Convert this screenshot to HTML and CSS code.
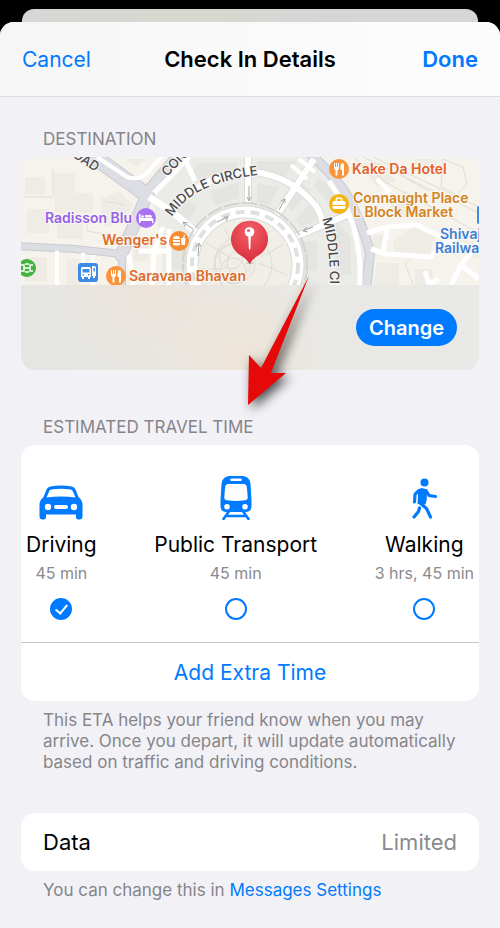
FILE: index.html
```html
<!DOCTYPE html>
<html lang="en">
<head>
    <meta charset="UTF-8">
    <meta name="viewport" content="width=device-width, initial-scale=1.0">
    <title>Check In Details</title>
    <link rel="stylesheet" href="styles.css">
</head>
<body>
    <div class="back-sheet"></div>
    <div class="sheet">
        <header class="nav-bar">
            <button type="button" class="nav-button">Cancel</button>
            <h1>Check In Details</h1>
            <button type="button" class="nav-button done">Done</button>
        </header>

        <main>
            <section class="destination">
                <h2>Destination</h2>
                <div class="map-card">
                    <svg class="map" viewBox="0 0 458 128" preserveAspectRatio="xMidYMid slice" role="img" aria-label="Map of the destination">
                        <defs>
                            <path id="circleNorth" d="M151 60Q172 24 245 17"/>
                            <path id="circleEast" d="M301 62Q312 92 308 170"/>
                            <radialGradient id="pinFill" cx="50%" cy="25%" r="75%">
                                <stop offset="0" stop-color="#f0616b"/>
                                <stop offset="1" stop-color="#d92b3a"/>
                            </radialGradient>
                        </defs>
                        <rect width="458" height="128" fill="#f5f3ec"/>

                        <!-- city blocks -->
                        <path fill="#eeece5" d="M4 20h20v18H4zM32 16h22v20h18v20H34zM6 52h22v24H6zM36 62h26v20H36zM80 42l18-8 14 14-10 18-20 4zM46 102h14v26H46zM4 100h22v24H4zM112 84h16v20h-16zM104 2h20l-8 8zM336 6h24l16 18-20 6zM390 2h26v16h-12zM366 40l20-6 14 20-24 8zM352 78h12v14h-12zM372 84l20-14 22 6-6 24-34-2zM356 106h22v22h-26zM394 112h18v16h-18zM424 92l16-12 18 10v12z"/>
                        <path fill="#ebebe8" d="M166 0H291L328 40L345 78L346 128H142L141 92L132 42Z"/>
                        <path fill="#e4e5e1" d="M176 6h40v10l-34 12-14-8zM236 4h40l-16 20-24-6zM190 34l28-9v16l-24 8zM236 26l22 5-10 18-12-4zM272 22l18 10-18 22-10-8zM292 44l10 16-22 10-6-8zM280 84h16v30h-14zM150 84h16v28h-16zM160 38l16 12-8 14-12-10zM310 60l20 20v38h-14zM298 20l18 18-10 6-14-16z"/>

                        <!-- rail tracks and footpaths -->
                        <g fill="none" stroke="#dfddd7">
                            <path d="M332 0L366 26 458 76M342 0L458 56M352 0L458 50"/>
                            <path d="M374 8l12 14 22 12M392 128l-8-22 8-6M422 2l20 8 4 16-10 12-16-8zM84 44l20 4M66 60v14l24 4M2 40h30V12"/>
                        </g>

                        <!-- main roads -->
                        <g fill="none" stroke="#c8cad0" stroke-linecap="round">
                            <path stroke-width="16" d="M54-14L126 38"/>
                            <path stroke-width="13" d="M126 38L100 98"/>
                            <path stroke-width="11" d="M122 40L162-8"/>
                            <path stroke-width="8" d="M-5 89L54 92 101 97V132"/>
                            <path stroke-width="10" d="M286-6Q320 24 330 46Q344 74 349 96L345 134"/>
                        </g>
                        <g fill="none" stroke="#dcdee3" stroke-linecap="round">
                            <path stroke-width="14" d="M54-14L126 38"/>
                            <path stroke-width="11" d="M126 38L100 98"/>
                            <path stroke-width="9" d="M122 40L162-8"/>
                            <path stroke-width="6" d="M-5 89L54 92 101 97V132"/>
                            <path stroke-width="8" d="M286-6Q320 24 330 46Q344 74 349 96L345 134"/>
                        </g>

                        <!-- streets -->
                        <g fill="none" stroke="#dcdddb" stroke-width="8" stroke-linejoin="round">
                            <path d="M128 40L150 54 176 76M227 0V46M256 58L293 2M272 81L326 58"/>
                            <path d="M227 14Q270 18 294 48Q300 55 302 68"/>
                        </g>
                        <g fill="none" stroke="#fff" stroke-linejoin="round">
                            <path stroke-width="6" d="M227 0V46M256 58L293 2M272 81L326 58"/>
                            <path stroke-width="7" d="M128 40L150 54 176 76"/>
                            <path stroke-width="5" d="M133 36L168 0"/>
                            <path stroke-width="6" d="M150 56Q175 20 227 14Q270 18 294 48Q300 55 302 68"/>
                            <path stroke-width="5" d="M142 70L133 96 131 128M148 72V128M118 94H148M112 128L108 98M164 2L174 24"/>
                            <path stroke-width="4" d="M76 0L106 20Q118 24 126 16L142-2"/>
                            <path stroke-width="4" d="M36 94V128M62 96V112M72 98V128M356 22L368 34 362 42"/>
                            <path stroke-width="5" d="M308 24L324 48Q336 70 339 108V128"/>
                            <path stroke-width="5" d="M346 76L366 70 396 68 408 74 427 83 458 94M350 92L366 97 410 100 424 84M366 72L362 96M458 86L440 108 430 128M440 108L458 122M404 114L408 127 418 122"/>
                            <path stroke-width="4" d="M270 8L286 22M278 2L294 15"/>
                        </g>

                        <!-- inner circle -->
                        <circle cx="224" cy="108" r="62" fill="none" stroke="#d2d4cc" stroke-width="2" stroke-dasharray="16 2"/>
                        <circle cx="224" cy="108" r="53" fill="#f0eee6" stroke="#d9dad7" stroke-width="13"/>
                        <circle cx="224" cy="108" r="53" fill="none" stroke="#fff" stroke-width="11"/>
                        <circle cx="224" cy="108" r="53" fill="none" stroke="#dfe1e1" stroke-width="4" stroke-dasharray="9 6"/>
                        <g fill="none" stroke="#dddcd1">
                            <circle cx="218" cy="106" r="12"/>
                            <circle cx="214" cy="106" r="20"/>
                            <circle cx="222" cy="108" r="29"/>
                            <circle cx="210" cy="100" r="12"/>
                            <circle cx="212" cy="114" r="13"/>
                            <path d="M183 84L208 100M180 112H202M192 136L212 114M222 66V84M262 88L240 100M266 118L238 106M248 74L236 94M204 72L214 92"/>
                        </g>
                        <g fill="none" stroke="#a2a3a5">
                            <path d="M228 29v14M226 40l2 4 2-4M258 53l6-11M260 44l4-2v4M196 65l11-5M203 60l4 0-2 4M172 72l-9-6M167 66l-5-1 2 5M177 99l1-12M175 90l3-4 2 4M292 70l-10 4M286 70l-4 4 5 1"/>
                        </g>

                        <!-- street names -->
                        <g class="street">
                            <text transform="translate(44 -5) rotate(33)">ROAD</text>
                            <text transform="translate(146 20) rotate(-46)">CONN</text>
                            <text><textPath href="#circleNorth">MIDDLE CIRCLE</textPath></text>
                            <text><textPath href="#circleEast">MIDDLE CIRCLE</textPath></text>
                        </g>

                        <!-- places -->
                        <g class="place">
                            <text x="24" y="66" fill="#9460e8">Radisson Blu</text>
                            <text x="81" y="88" fill="#dd6a2c">Wenger's</text>
                            <text x="108" y="124" fill="#dd6a2c">Saravana Bhavan</text>
                            <text x="331" y="17" fill="#e2612c">Kake Da Hotel</text>
                            <text x="332" y="46" fill="#d38325">Connaught Place</text>
                            <text x="332" y="60" fill="#d38325">L Block Market</text>
                            <text x="419" y="82" fill="#3c80d8">Shivaji</text>
                            <text x="414" y="96" fill="#3c80d8">Railway</text>
                        </g>
                        <rect x="456" y="49" width="12" height="18" rx="2" fill="#3f8ae4"/>

                        <circle cx="125" cy="61" r="10" fill="#a873f2"/>
                        <path fill="#fff" d="M118 57h1.500v4h11a2 2 0 0 1 2 2v3H131v-2h-11.500v2H118zM124 58h5a2 2 0 0 1 2 2v.500h-7z"/>
                        <circle cx="121.500" cy="59.500" r="1.300" fill="#fff"/>

                        <circle cx="158" cy="84" r="10" fill="#f78d35"/>
                        <path fill="#fff" d="M152 82q0-3 3.500-3t3.500 3zM152 83h7v2h-7zM152 86h7v1q0 1.500-1.500 1.500h-4q-1.500 0-1.500-1.500zM160 81h2l1-3h1l-.700 3h1.200l-.500 7h-3.500z"/>

                        <g fill="#f9943b">
                            <circle cx="95" cy="119" r="10"/>
                            <circle cx="318" cy="12" r="10"/>
                        </g>
                        <g id="cutlery" fill="#fff">
                            <path d="M90 113h1v4h1v-4h1v4h1v-4h1v5q0 1.500-1.500 2v5.500h-2V120q-1.500-.500-1.500-2zM98 113q2 0 2 2v10.500h-2V120h-1.500v-4q0-2 1.500-3z"/>
                        </g>
                        <use href="#cutlery" x="223" y="-107"/>

                        <circle cx="318" cy="47" r="10" fill="#f6b410"/>
                        <path fill="#fff" fill-rule="evenodd" d="M314.500 44v-2q0-1.500 1.500-1.500h4q1.500 0 1.500 1.500v2h1.500q1.500 0 1.500 1.500v5q0 1.500-1.500 1.500h-10q-1.500 0-1.500-1.500v-5q0-1.500 1.500-1.500zm1.500 0h4v-2h-4z"/>
                        <path stroke="#f6b410" d="M311 48.500H325"/>

                        <circle cx="6" cy="111" r="9" fill="#41b53d"/>
                        <path fill="none" stroke="#fff" stroke-width="1.500" d="M0 108h3v6H0M3 111h6M12 108H9v6h3M4 107h4M4 115h4"/>

                        <rect x="57" y="106" width="20" height="19" rx="3" fill="#3f8ae4"/>
                        <path fill="#fff" fill-rule="evenodd" d="M61 110h7q2 0 2 2v8h-1v2h-2v-2h-4v2h-2v-2h-1v-8q0-2 1-2zm.500 2v3.500h7V112zm0 5v1.500h1.500V117zm5.500 0v1.500h1.500V117zM71 109h2q2 0 2 2v8h-1v2h-2v-2h-1zm1.500 2v3.500h1.500V111z"/>

                        <!-- destination pin -->
                        <ellipse cx="229" cy="106" rx="4" ry="1" fill="#000" opacity=".15"/>
                        <path fill="url(#pinFill)" d="M228.500 107Q226 102 219 98A18.500 18.500 0 1 1 238 98Q231 102 228.500 107Z"/>
                        <circle cx="228.500" cy="75" r="4.800" fill="#fff"/>
                        <path fill="#fff" d="M227.300 79h2.600l-.600 13q-.700 1.500-1.400 0z"/>
                        <circle cx="227.500" cy="73.500" r="1.500" fill="#e2606a"/>
                    </svg>
                    <div class="map-footer">
                        <button type="button" class="change-button">Change</button>
                    </div>
                </div>
                <svg class="arrow" viewBox="0 0 64 132" aria-hidden="true">
                    <path d="M63 1L25 98H40L2 130 3 80 15 93Z"/>
                </svg>
            </section>

            <section class="travel">
                <h2 id="travelTitle">Estimated Travel Time</h2>
                <div class="card">
                    <div class="modes" role="radiogroup" aria-labelledby="travelTitle">
                        <label class="mode">
                            <svg width="44" height="44" viewBox="0 0 44 44" aria-hidden="true">
                                <path fill="#007aff" fill-rule="evenodd" d="M11.500 10.500Q22 8.500 32.500 10.500Q35.500 11 36.500 13.500L39.500 21Q43.500 24 43.500 29V40.500Q43.500 43.500 40.500 43.500H39.500Q37 43.500 37 41V38.500H7V41Q7 43.500 4.500 43.500H3.500Q.5 43.500.5 40.500V29Q.5 24 4.500 21L7.500 13.500Q8.500 11 11.500 10.500ZM12.500 13.500Q10.800 13.800 10.200 15.300L7.500 21.500Q22 19.500 36.500 21.500L33.800 15.300Q33.200 13.800 31.500 13.500Q22 12 12.500 13.500ZM9 27.800a3.200 3.200 0 1 0 0 6.400a3.200 3.200 0 1 0 0-6.400ZM35 27.800a3.200 3.200 0 1 0 0 6.400a3.200 3.200 0 1 0 0-6.400ZM17 29a2 2 0 0 0 0 4H27a2 2 0 0 0 0-4Z"/>
                            </svg>
                            <span class="mode-name">Driving</span>
                            <span class="mode-time">45 min</span>
                            <input type="radio" name="mode" value="driving" checked>
                        </label>
                        <label class="mode">
                            <svg width="44" height="44" viewBox="0 0 44 44" aria-hidden="true">
                                <path fill="#007aff" fill-rule="evenodd" d="M13 0.500Q22-2 31 .5Q36 2 36.500 8L37.500 24V30Q37.500 36 31.500 36H12.500Q6.500 36 6.500 30V24L7.500 8Q8 2 13 .5ZM17.500 2.500a1.300 1.300 0 0 0 0 2.600H26.500a1.300 1.300 0 0 0 0-2.600ZM14 8Q11.500 8 11.200 10.500L10.300 21Q10 24 13 24.300Q22 25.500 31 24.300Q34 24 33.700 21L32.800 10.500Q32.500 8 30 8ZM13 28a2.800 2.800 0 1 0 0 5.600a2.800 2.800 0 1 0 0-5.600ZM31 28a2.800 2.800 0 1 0 0 5.600a2.800 2.800 0 1 0 0-5.600Z"/>
                                <path fill="none" stroke="#007aff" stroke-width="2.600" stroke-linecap="round" d="M14.500 36L9.500 43M29.500 36L34.500 43M12.500 40H31.500"/>
                            </svg>
                            <span class="mode-name">Public Transport</span>
                            <span class="mode-time">45 min</span>
                            <input type="radio" name="mode" value="transport">
                        </label>
                        <label class="mode">
                            <svg width="44" height="44" viewBox="0 0 44 44" aria-hidden="true">
                                <circle cx="22.500" cy="6.500" r="4" fill="#007aff"/>
                                <path fill="#007aff" d="M15 14Q21 10.500 24.800 14V23.500L23.500 28.500 15.500 28 16 19Z"/>
                                <g fill="none" stroke="#007aff" stroke-width="3.200" stroke-linecap="round" stroke-linejoin="round">
                                    <path d="M19 14Q15 15 13 18.500L12.500 26"/>
                                    <path d="M24 14.500L27 19.500 33.500 20.500"/>
                                    <path d="M18 27L24.500 32.500 28.500 41"/>
                                    <path d="M17.500 32L16.500 35.500 12 41"/>
                                </g>
                            </svg>
                            <span class="mode-name">Walking</span>
                            <span class="mode-time">3 hrs, 45 min</span>
                            <input type="radio" name="mode" value="walking">
                        </label>
                    </div>
                    <button type="button" class="add-time">Add Extra Time</button>
                </div>
                <p class="note">This ETA helps your friend know when you may arrive. Once you depart, it will update automatically based on traffic and driving conditions.</p>
            </section>

            <section class="data">
                <div class="card data-row">
                    <span>Data</span>
                    <span class="data-value">Limited</span>
                </div>
                <p class="note">You can change this in <a href="#">Messages Settings</a></p>
            </section>
        </main>
    </div>
</body>
</html>
```

FILE: styles.css
```css
* {
    box-sizing: border-box;
}

body {
    font-family: Inter, "Liberation Sans", sans-serif;
    font-size: 22px;
    display: flex;
    flex-direction: column;
    min-height: 100vh;
    margin: 0;
    padding-top: 9px;
    background-color: #000000;
    color: #000000;
}

button {
    font: inherit;
    border: none;
    padding: 0;
    background: none;
    color: #007aff;
    cursor: pointer;
}

.back-sheet {
    height: 13px;
    margin: 0 22px;
    border-radius: 12px 12px 0 0;
    background: linear-gradient(90deg, #d6d8d6, #d8d8ce 40%, #d6d6d6 60%);
}

.sheet {
    flex: 1;
    border-radius: 14px 14px 0 0;
    background-color: #f2f1f6;
    overflow: hidden;
}

.nav-bar {
    display: grid;
    grid-template-columns: 1fr auto 1fr;
    align-items: center;
    height: 75px;
    padding: 0 22px;
    background: linear-gradient(90deg, #f6f6f6, #fdfdfd);
    border-bottom: 1px solid #dcdce0;
}

.nav-bar h1 {
    font-size: 22px;
    font-weight: 600;
    margin: 0;
}

.nav-button {
    justify-self: start;
    font-size: 21px;
}

.nav-button.done {
    justify-self: end;
    font-size: 22px;
    font-weight: 600;
}

main {
    padding: 31px 21px 24px;
}

h2 {
    font-size: 17px;
    font-weight: 400;
    line-height: 22px;
    text-transform: uppercase;
    color: #85858a;
    margin: 0 22px 7px;
}

/* Destination */
.destination {
    position: relative;
    margin-bottom: 46px;
}

.map-card {
    border-radius: 14px;
    overflow: hidden;
}

.map {
    display: block;
    width: 100%;
    height: 128px;
}

.street {
    font-size: 13px;
    font-weight: 500;
    fill: #4a4a4c;
    stroke: #f6f6f4;
    stroke-width: 2px;
    paint-order: stroke;
}

.place {
    font-size: 14px;
    font-weight: 600;
    stroke: #faf8f2;
    stroke-width: 2px;
    paint-order: stroke;
}

.map-footer {
    display: flex;
    justify-content: flex-end;
    align-items: center;
    height: 85px;
    padding: 0 22px;
    background: radial-gradient(circle at 48% 90%, #efe5d8, transparent 32%), radial-gradient(circle at 28% 0, #ece3db, transparent 32%), linear-gradient(90deg, #e5e6e3, #e9e8e3 50%, #e9e9e7);
}

.change-button {
    height: 37px;
    padding: 0 13px;
    border-radius: 19px;
    background-color: #007aff;
    color: #ffffff;
    font-size: 20px;
    font-weight: 600;
}

.arrow {
    position: absolute;
    top: 147px;
    left: 225px;
    width: 64px;
    height: 132px;
    overflow: visible;
    fill: #e50909;
    filter: drop-shadow(4px 4px 6px rgba(0, 0, 0, 0.7));
    pointer-events: none;
}

/* Travel time */
.card {
    border-radius: 14px;
    background-color: #ffffff;
    overflow: hidden;
}

.modes {
    display: flex;
    justify-content: space-between;
    padding: 31px 5px 22px;
    border-bottom: 1px solid #c6c6c8;
}

.mode {
    display: flex;
    flex-direction: column;
    align-items: center;
    white-space: nowrap;
}

.mode-name {
    font-size: 21px;
    line-height: 28px;
    margin-top: 11px;
}

.mode-time {
    font-size: 16px;
    line-height: 22px;
    margin: 3px 0 14px;
    color: #8a8a8e;
}

.mode input {
    appearance: none;
    display: grid;
    place-items: center;
    width: 22px;
    height: 22px;
    margin: 0;
    border: 2px solid #007aff;
    border-radius: 50%;
}

.mode input:checked {
    background-color: #007aff;
}

.mode input:checked::after {
    content: "";
    width: 5px;
    height: 10px;
    margin-bottom: 2px;
    border: solid #ffffff;
    border-width: 0 2px 2px 0;
    transform: rotate(40deg);
}

.add-time {
    display: block;
    width: 100%;
    height: 58px;
    font-size: 21px;
}

.note {
    font-size: 17px;
    line-height: 21px;
    color: #85858a;
    margin: 9px 21px 0 22px;
}

.note a {
    color: #007aff;
    text-decoration: none;
}

/* Data */
.data {
    margin-top: 40px;
}

.data-row {
    display: flex;
    justify-content: space-between;
    align-items: center;
    height: 58px;
    padding: 0 22px;
}

.data-value {
    color: #8a8a8e;
}
```
